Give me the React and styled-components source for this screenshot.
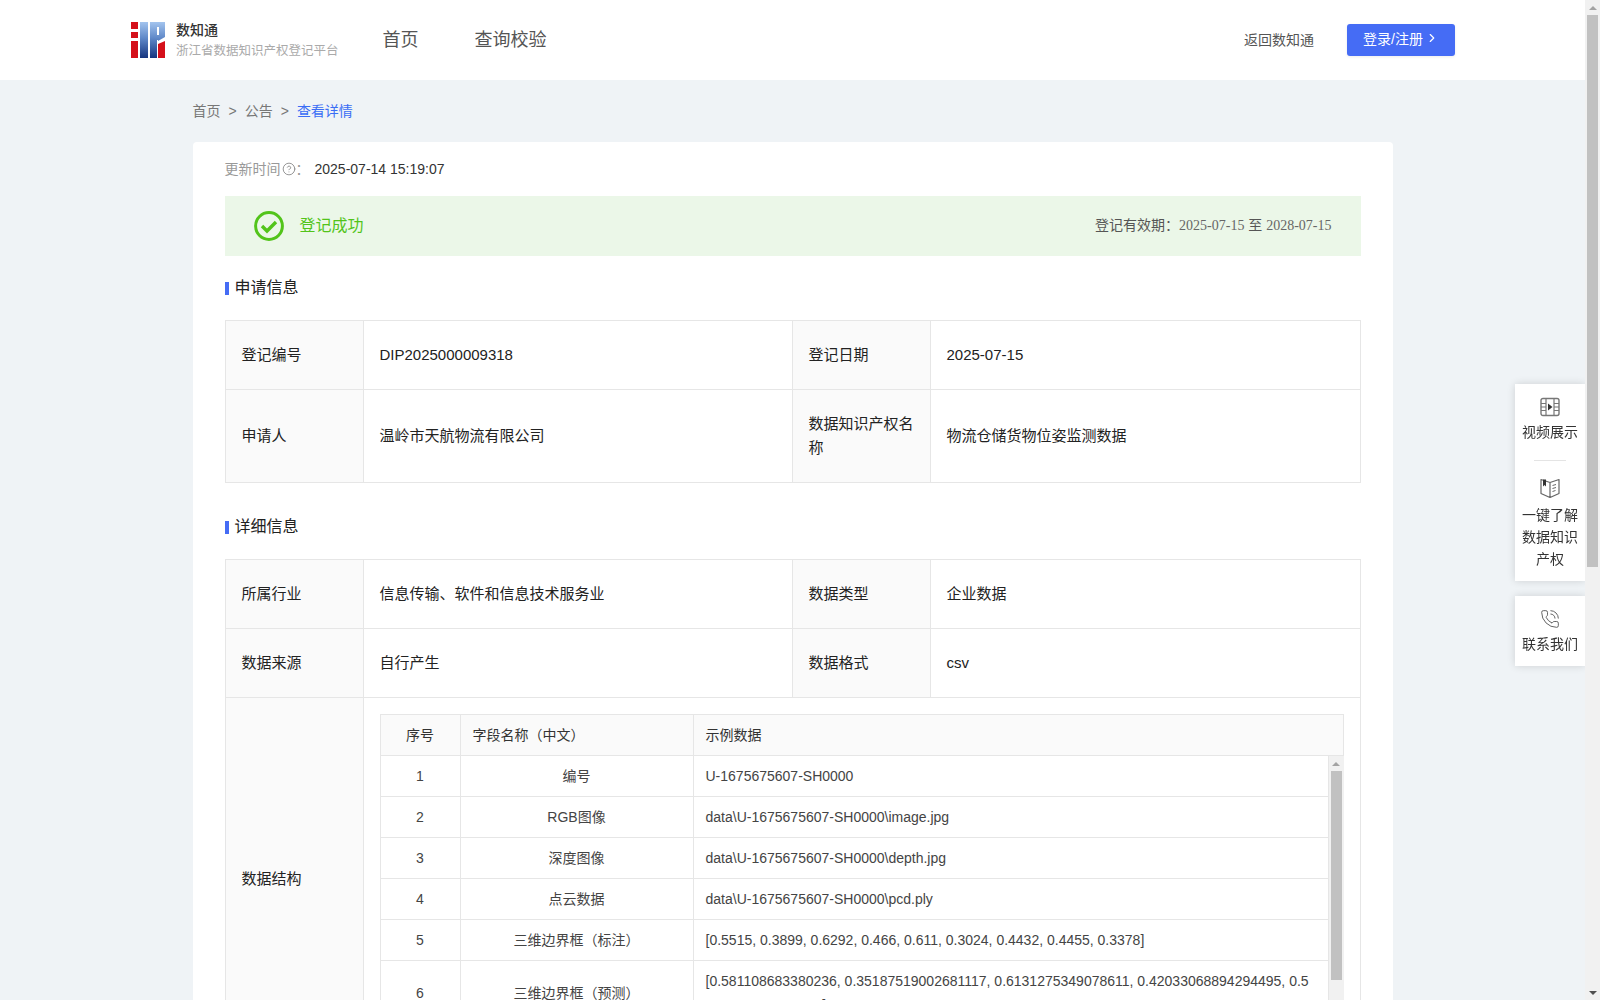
import styled, { createGlobalStyle } from "styled-components";
import { ChevronRight, CircleHelp, PhoneCall } from "lucide-react";

const fields = [
  ["1", "编号", "U-1675675607-SH0000"],
  ["2", "RGB图像", "data\\U-1675675607-SH0000\\image.jpg"],
  ["3", "深度图像", "data\\U-1675675607-SH0000\\depth.jpg"],
  ["4", "点云数据", "data\\U-1675675607-SH0000\\pcd.ply"],
  ["5", "三维边界框（标注）", "[0.5515, 0.3899, 0.6292, 0.466, 0.611, 0.3024, 0.4432, 0.4455, 0.3378]"],
  [
    "6",
    "三维边界框（预测）",
    "[0.581108683380236, 0.35187519002681117, 0.6131275349078611, 0.42033068894294495, 0.5984630094512984]",
  ],
  ["7", "货物类别", "纸箱"],
  ["8", "置信度", "0.9263"],
];

function App() {
  return (
    <>
      <GlobalStyle />
      <Header>
        <Brand>
          <Logo />
          <BrandText>
            <BrandName>数知通</BrandName>
            <BrandSub>浙江省数据知识产权登记平台</BrandSub>
          </BrandText>
        </Brand>
        <Nav>
          <NavLink>首页</NavLink>
          <NavLink>查询校验</NavLink>
        </Nav>
        <HeaderRight>
          <BackLink>返回数知通</BackLink>
          <LoginButton>
            登录/注册
            <ChevronRight size={14} strokeWidth={2} />
          </LoginButton>
        </HeaderRight>
      </Header>

      <Main>
        <Breadcrumb>
          <span>首页</span>
          <Sep>&gt;</Sep>
          <span>公告</span>
          <Sep>&gt;</Sep>
          <Current>查看详情</Current>
        </Breadcrumb>

        <Card>
          <UpdateRow>
            <UpdateLabel>
              更新时间
              <CircleHelp size={14} strokeWidth={1.5} />
              ：
            </UpdateLabel>
            <span>2025-07-14 15:19:07</span>
          </UpdateRow>

          <Banner>
            <BannerStatus>
              <SuccessIcon />
              <BannerText>登记成功</BannerText>
            </BannerStatus>
            <BannerDates>
              登记有效期：<DateText>2025-07-15</DateText> 至 <DateText>2028-07-15</DateText>
            </BannerDates>
          </Banner>

          <SectionTitle>申请信息</SectionTitle>
          <InfoTable>
            <InfoCols />
            <tbody>
              <tr>
                <Label>登记编号</Label>
                <Value>DIP2025000009318</Value>
                <Label>登记日期</Label>
                <Value>2025-07-15</Value>
              </tr>
              <tr>
                <Label>申请人</Label>
                <Value>温岭市天航物流有限公司</Value>
                <Label>数据知识产权名称</Label>
                <Value>物流仓储货物位姿监测数据</Value>
              </tr>
            </tbody>
          </InfoTable>

          <SectionTitle $spaced>详细信息</SectionTitle>
          <InfoTable>
            <InfoCols />
            <tbody>
              <tr>
                <Label>所属行业</Label>
                <Value>信息传输、软件和信息技术服务业</Value>
                <Label>数据类型</Label>
                <Value>企业数据</Value>
              </tr>
              <tr>
                <Label>数据来源</Label>
                <Value>自行产生</Value>
                <Label>数据格式</Label>
                <Value>csv</Value>
              </tr>
              <tr>
                <Label>数据结构</Label>
                <Value colSpan={3}>
                  <FieldHead>
                    <FieldCols />
                    <thead>
                      <tr>
                        <HeadCell $center>序号</HeadCell>
                        <HeadCell>字段名称（中文）</HeadCell>
                        <HeadCell>示例数据</HeadCell>
                      </tr>
                    </thead>
                  </FieldHead>
                  <FieldScroll>
                    <FieldViewport>
                      <FieldBody>
                        <FieldCols />
                        <tbody>
                          {fields.map(([no, name, sample]) => (
                            <tr key={no}>
                              <BodyCell $center>{no}</BodyCell>
                              <BodyCell $center>{name}</BodyCell>
                              <BodyCell>{sample}</BodyCell>
                            </tr>
                          ))}
                        </tbody>
                      </FieldBody>
                    </FieldViewport>
                    <ScrollRail thumb={209} />
                  </FieldScroll>
                </Value>
              </tr>
              <tr>
                <Label>数据规模</Label>
                <Value>12.6 GB</Value>
                <Label>更新频率</Label>
                <Value>每月</Value>
              </tr>
              <tr>
                <Label>数据描述</Label>
                <Value colSpan={3}>
                  本数据集记录物流仓储场景下货物的图像、深度、点云及三维边界框信息，用于货物位姿监测。
                </Value>
              </tr>
            </tbody>
          </InfoTable>

          <SectionTitle $spaced>存证信息</SectionTitle>
          <InfoTable>
            <InfoCols />
            <tbody>
              <tr>
                <Label>存证平台</Label>
                <Value>浙江省知识产权区块链公共存证平台</Value>
                <Label>存证时间</Label>
                <Value>2025-07-14</Value>
              </tr>
            </tbody>
          </InfoTable>
        </Card>
      </Main>

      <Footer>浙江省数据知识产权登记平台</Footer>

      <SideDock>
        <DockCard>
          <DockItem>
            <VideoIcon />
            视频展示
          </DockItem>
          <DockDivider />
          <DockItem $gap={6}>
            <BookIcon />
            一键了解数据知识产权
          </DockItem>
        </DockCard>
        <DockCard>
          <DockItem>
            <PhoneCall size={20} strokeWidth={1.1} color="#555" />
            联系我们
          </DockItem>
        </DockCard>
      </SideDock>

      <PageRail>
        <ScrollRail thumb={552} />
      </PageRail>
    </>
  );
}

export default App;

function ScrollRail({ thumb }) {
  return (
    <Rail>
      <RailArrow>
        <ArrowUp />
      </RailArrow>
      <RailThumb $height={thumb} />
      <RailArrow $bottom>
        <ArrowDown />
      </RailArrow>
    </Rail>
  );
}

function InfoCols() {
  return (
    <colgroup>
      <col width="138" />
      <col width="429" />
      <col width="138" />
      <col />
    </colgroup>
  );
}

function FieldCols() {
  return (
    <colgroup>
      <col width="80" />
      <col width="233" />
      <col />
    </colgroup>
  );
}

function Logo() {
  return (
    <svg width="34" height="36" viewBox="0 0 34 36" aria-hidden="true">
      <defs>
        <linearGradient id="logoBlue" x1="0" y1="0" x2="0" y2="1">
          <stop offset="0" stopColor="#a3c4ee" />
          <stop offset="0.45" stopColor="#5f88c8" />
          <stop offset="1" stopColor="#16357f" />
        </linearGradient>
      </defs>
      <path d="M0 0h7v7H0zM0 10h7v6H0zM0 19h7v17H0z" fill="#d5101a" />
      <path d="M9 0h8v36H9z" fill="url(#logoBlue)" />
      <path
        fill="url(#logoBlue)"
        fillRule="evenodd"
        d="M19 0h15v15l-7 4v-1h-1v18h-7zM26 5v8h2V5z"
      />
      <path d="M27 22l7-3v17h-7z" fill="#d5101a" />
    </svg>
  );
}

function SuccessIcon() {
  return (
    <svg width="30" height="30" viewBox="0 0 30 30" aria-hidden="true">
      <circle cx="15" cy="15" r="13.4" fill="none" stroke="#52c41a" strokeWidth="3" />
      <path d="M8 15l5 5 9-9" fill="none" stroke="#52c41a" strokeWidth="3.4" />
    </svg>
  );
}

function VideoIcon() {
  return (
    <svg width="20" height="20" viewBox="0 0 20 20" aria-hidden="true">
      <rect x="1" y="1.5" width="18" height="17" rx="2" fill="none" stroke="#777" strokeWidth="1.4" />
      <path
        d="M6 1.5v17M14 1.5v17M1 6.5h5M1 10h5M1 13.5h5M14 6.5h5M14 10h5M14 13.5h5"
        fill="none"
        stroke="#777"
        strokeWidth="1.2"
      />
      <path d="M8 6.5l4.5 3.5L8 13.5z" fill="#333" />
    </svg>
  );
}

function BookIcon() {
  return (
    <svg width="20" height="20" viewBox="0 0 20 20" aria-hidden="true">
      <path
        d="M1 1.5l9 3 9-3v14l-9 4-9-4zM10 4.5v15"
        fill="none"
        stroke="#666"
        strokeWidth="1.2"
        strokeLinejoin="round"
      />
      <path d="M3 1.5h3v7L4.5 7 3 8.5z" fill="#333" />
      <path d="M12.5 7.5l3.5-1M12.5 10.5l3.5-1M12.5 13.5l3-1" fill="none" stroke="#666" strokeWidth="1" />
    </svg>
  );
}

const GlobalStyle = createGlobalStyle`
  body {
    margin: 0;
    padding-right: 15px;
    background-color: #eff3f6;
    color: #333;
    font-family: "Liberation Sans", "Noto Sans CJK SC", sans-serif;
    font-size: 14px;
  }
`;

const Header = styled.header`
  display: flex;
  align-items: center;
  height: 80px;
  padding: 0 130px 0 131px;
  background-color: #ffffff;
`;

const Brand = styled.div`
  display: flex;
  align-items: center;
  gap: 11px;
  margin-top: -1px;
`;

const BrandText = styled.div`
  display: flex;
  flex-direction: column;
  gap: 3px;
  margin-top: 2px;
`;

const BrandName = styled.div`
  font-size: 14px;
  line-height: 18px;
  font-weight: 500;
  color: #333;
`;

const BrandSub = styled.div`
  font-size: 12.5px;
  line-height: 18px;
  color: #aaa;
`;

const Nav = styled.nav`
  display: flex;
  gap: 56px;
  margin-left: 44px;
`;

const NavLink = styled.a`
  font-size: 18px;
  line-height: 26px;
  color: #555;
`;

const HeaderRight = styled.div`
  display: flex;
  align-items: center;
  gap: 33px;
  margin-left: auto;
`;

const BackLink = styled.a`
  margin-bottom: 2px;
  font-size: 14px;
  color: #555;
`;

const LoginButton = styled.button`
  display: flex;
  align-items: center;
  justify-content: center;
  gap: 2px;
  width: 108px;
  height: 32px;
  padding: 0 0 4px;
  border: 0;
  border-radius: 3px;
  background-color: #456cf5;
  box-shadow: 0 1px 3px rgba(0, 0, 0, 0.08);
  color: #ffffff;
  font-family: inherit;
  font-size: 14px;
`;

const Main = styled.main`
  width: 1200px;
  margin: 0 auto;
`;

const Breadcrumb = styled.div`
  display: flex;
  padding: 20px 0;
  line-height: 22px;
  color: #777;
`;

const Sep = styled.span`
  margin: 0 8px;
`;

const Current = styled.span`
  color: #3a6df5;
`;

const Card = styled.section`
  padding: 16px 32px 40px;
  border-radius: 4px;
  background-color: #ffffff;
`;

const UpdateRow = styled.div`
  display: flex;
  align-items: center;
  line-height: 22px;
  color: #333;
`;

const UpdateLabel = styled.span`
  display: flex;
  align-items: center;
  width: 90px;
  color: #999;

  svg {
    margin-left: 1px;
    color: #888;
  }
`;

const Banner = styled.div`
  display: flex;
  align-items: center;
  justify-content: space-between;
  height: 60px;
  margin-top: 16px;
  padding: 0 29px;
  background-color: #ebf7e8;
`;

const BannerStatus = styled.div`
  display: flex;
  align-items: center;
  gap: 16px;
  font-size: 16px;
  color: #52c41a;
`;

const BannerText = styled.span`
  margin-bottom: 5px;
`;

const BannerDates = styled.div`
  margin-bottom: 5px;
  font-size: 14px;
  color: #555;
`;

const DateText = styled.span`
  font-family: "Liberation Serif", "Noto Sans CJK SC", serif;
  color: #666;
`;

const SectionTitle = styled.h3`
  position: relative;
  margin: ${(props) => (props.$spaced ? "32px" : "20px")} 0 20px;
  padding-left: 10px;
  font-size: 16px;
  font-weight: 400;
  line-height: 24px;
  color: #222;

  &::before {
    content: "";
    position: absolute;
    left: 0;
    top: 6px;
    width: 4px;
    height: 13px;
    background-color: #456cf5;
  }
`;

const InfoTable = styled.table`
  width: 100%;
  border-collapse: collapse;
  table-layout: fixed;
  font-size: 15px;
  line-height: 24px;
  color: #222;
`;

const Label = styled.td`
  padding: 22px 16px;
  border: 1px solid #e6e6e6;
  background-color: #fafafa;
`;

const Value = styled.td`
  padding: 22px 16px;
  border: 1px solid #e6e6e6;

  &:has(table) {
    padding: 16px;
  }
`;

const FieldHead = styled.table`
  width: 100%;
  border-collapse: collapse;
  table-layout: fixed;
  font-size: 14px;
  line-height: 24px;
`;

const HeadCell = styled.th`
  padding: 8px 12px;
  border: 1px solid #e6e6e6;
  background-color: #fafafa;
  font-weight: 400;
  color: #333;
  text-align: ${(props) => (props.$center ? "center" : "left")};
`;

const FieldScroll = styled.div`
  display: flex;
  height: 286px;
  border-bottom: 1px solid #e6e6e6;
`;

const FieldViewport = styled.div`
  flex: 1;
  min-width: 0;
  overflow: hidden;
`;

const FieldBody = styled.table`
  width: 100%;
  border-collapse: collapse;
  table-layout: fixed;
  font-size: 14px;
  line-height: 24px;
`;

const BodyCell = styled.td`
  padding: 8px 12px;
  border: 1px solid #e6e6e6;
  border-top: 0;
  color: #444;
  word-break: break-all;
  text-align: ${(props) => (props.$center ? "center" : "left")};
`;

const PageRail = styled.div`
  position: fixed;
  top: 0;
  right: 0;
  bottom: 0;
  display: flex;
`;

const Rail = styled.div`
  position: relative;
  flex: none;
  display: flex;
  flex-direction: column;
  width: 15px;
  background-color: #f1f1f1;
`;

const RailArrow = styled.div`
  flex: none;
  display: flex;
  align-items: center;
  justify-content: center;
  height: 15px;
  ${(props) => props.$bottom && "position: absolute; left: 0; right: 0; bottom: 0;"}
`;

const ArrowUp = styled.span`
  border-right: 4px solid transparent;
  border-bottom: 4px solid #a3a3a3;
  border-left: 4px solid transparent;
`;

const ArrowDown = styled.span`
  border-top: 4px solid #505050;
  border-right: 4px solid transparent;
  border-left: 4px solid transparent;
`;

const RailThumb = styled.div`
  flex: none;
  height: ${(props) => props.$height}px;
  margin: 0 2px;
  background-color: #c1c1c1;
`;

const Footer = styled.footer`
  margin-top: 40px;
  padding: 170px 0;
  background-color: #2b3245;
  color: #aab;
  text-align: center;
`;

const SideDock = styled.aside`
  position: fixed;
  top: 384px;
  right: 15px;
  display: flex;
  flex-direction: column;
  gap: 15px;
  width: 70px;
`;

const DockCard = styled.div`
  display: flex;
  flex-direction: column;
  align-items: center;
  padding: 13px 6px 11px;
  background-color: #ffffff;
  box-shadow: 0 0 8px rgba(0, 0, 0, 0.14);
`;

const DockItem = styled.a`
  display: flex;
  flex-direction: column;
  align-items: center;
  gap: ${(props) => props.$gap || 4}px;
  font-size: 14px;
  line-height: 22px;
  color: #333;
  text-align: center;

  svg {
    display: block;
  }
`;

const DockDivider = styled.div`
  width: 32px;
  height: 1px;
  margin: 17px 0;
  background-color: #e4e4e4;
`;
